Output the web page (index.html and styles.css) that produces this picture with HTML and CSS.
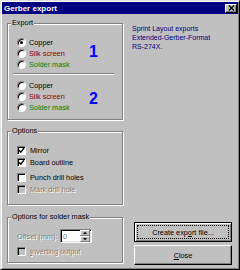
FILE: index.html
```html
<!DOCTYPE html>
<html lang="en">
<head>
    <meta charset="UTF-8">
    <title>Gerber export</title>
    <link rel="stylesheet" href="styles.css">
</head>
<body>
    <div class="window">
        <div class="titlebar">
            <span class="title">Gerber export</span>
            <span class="close-box">
                <svg width="7" height="6" viewBox="0 0 7 6"><path d="M1 0.5l5 5M6 0.5l-5 5" stroke="#000" stroke-width="1.3" fill="none"/></svg>
            </span>
        </div>

        <div class="dialog-body">
            <div class="left">
                <fieldset class="group export">
                    <legend>Export</legend>
                    <div class="layer">
                        <ul class="choices">
                            <li class="opt"><span class="radio on"></span>Copper</li>
                            <li class="opt silk"><span class="radio"></span>Silk screen</li>
                            <li class="opt mask"><span class="radio"></span>Solder mask</li>
                        </ul>
                        <span class="layer-num up">1</span>
                    </div>
                    <hr class="sep">
                    <div class="layer">
                        <ul class="choices">
                            <li class="opt"><span class="radio"></span>Copper</li>
                            <li class="opt silk"><span class="radio"></span>Silk screen</li>
                            <li class="opt mask"><span class="radio"></span>Solder mask</li>
                        </ul>
                        <span class="layer-num down">2</span>
                    </div>
                </fieldset>

                <fieldset class="group options">
                    <legend>Options</legend>
                    <div class="check"><span class="box"><svg width="7" height="7" viewBox="0 0 7 7"><path d="M1 3.2l1.8 1.9 3.2-4" stroke="#000" stroke-width="1.4" fill="none"/></svg></span>Mirror</div>
                    <div class="check"><span class="box"><svg width="7" height="7" viewBox="0 0 7 7"><path d="M1 3.2l1.8 1.9 3.2-4" stroke="#000" stroke-width="1.4" fill="none"/></svg></span>Board outline</div>
                    <div class="check spaced"><span class="box"></span>Punch drill holes</div>
                    <div class="check disabled"><span class="box"></span>Mark drill hole</div>
                </fieldset>

                <fieldset class="group solder">
                    <legend>Options for solder mask</legend>
                    <div class="offset-row">
                        <span class="offset-label disabled">Offset (mm):</span>
                        <span class="spin-field">
                            <span class="value">0</span>
                            <svg class="spin" width="10" height="12" viewBox="0 0 10 12">
                                <rect width="10" height="12" fill="#c0c0c0"/>
                                <path d="M0 0.5h9.5M0.5 0v5.5M0 6.5h9.5M0.5 6v5.5" stroke="#fff" fill="none"/>
                                <path d="M0 5.5h10M9.5 0v6M0 11.5h10M9.5 6v6" stroke="#808080" fill="none"/>
                                <path d="M5 1.8l2 2.2h-4zM3 8h4l-2 2.2z" fill="#000"/>
                            </svg>
                        </span>
                    </div>
                    <div class="check disabled second"><span class="box"></span><span><u>I</u>nverting output</span></div>
                </fieldset>
            </div>

            <div class="right">
                <p class="info">Sprint Layout exports<br>Extended-Gerber-Format<br>RS-274X.</p>
                <div class="buttons">
                    <button class="btn btn-default"><span class="focus">Create exp<u>o</u>rt file...</span></button>
                    <button class="btn"><u>C</u>lose</button>
                </div>
            </div>
        </div>
    </div>
</body>
</html>
```

FILE: styles.css
```css
* {
    box-sizing: border-box;
}

body {
    margin: 0;
    font-family: "Liberation Sans", Arial, sans-serif;
    font-size: 7.3px;
    background: #c0c0c0;
    color: #000;
}

.window {
    width: 240px;
    height: 270px;
    padding: 1px;
    display: flex;
    flex-direction: column;
    background: #c0c0c0;
    border: 1px solid;
    border-color: #dfdfdf #000 #000 #dfdfdf;
    box-shadow: inset 1px 1px #fff, inset -1px -1px #808080;
}

.titlebar {
    height: 12px;
    padding: 0 1px 0 2px;
    display: flex;
    align-items: center;
    justify-content: space-between;
    background: #000080;
    color: #fff;
}

.title {
    font-size: 8px;
    font-weight: bold;
}

.close-box {
    width: 12px;
    height: 9px;
    display: flex;
    align-items: center;
    justify-content: center;
    background: #c0c0c0;
    border: 1px solid;
    border-color: #fff #000 #000 #fff;
    box-shadow: inset -1px -1px #808080;
}

.dialog-body {
    flex: 1;
    display: flex;
    gap: 9px;
    padding: 5px 6px 3px 5px;
}

.left {
    width: 116px;
    flex-shrink: 0;
    padding-bottom: 2px;
}

.right {
    flex: 1;
    display: flex;
    flex-direction: column;
    justify-content: space-between;
}

/* group boxes */
.group {
    margin: 0;
    min-width: 0;
    padding: 0 0 0 3px;
    border: 1px solid #808080;
    box-shadow: 1px 1px 0 #fff, inset 1px 1px 0 #fff;
}

.group legend {
    padding: 0 1px;
    line-height: 8px;
    background: #c0c0c0;
}

.export {
    padding-top: 10px;
    padding-bottom: 6px;
}

.options {
    margin-top: 7px;
    padding-top: 9px;
    padding-bottom: 9px;
}

.solder {
    margin-top: 8px;
    padding-top: 8px;
    padding-bottom: 5px;
}

/* export layers */
.layer {
    display: flex;
    align-items: center;
}

.choices {
    list-style: none;
    margin: 0 0 0 6px;
    padding: 0;
    width: 72px;
}

.opt {
    height: 11px;
    display: flex;
    align-items: center;
    gap: 3px;
}

.silk {
    color: #900000;
}

.mask {
    color: #008000;
}

.layer-num {
    font-size: 16px;
    font-weight: bold;
    line-height: 16px;
    color: #0000ff;
}

.layer-num.up {
    margin-bottom: 4px;
}

.layer-num.down {
    margin-top: 4px;
}

.sep {
    margin: 3px 8px 5px 2px;
    border: 0;
    border-top: 1px solid #808080;
    border-bottom: 1px solid #fff;
}

.radio {
    width: 9px;
    height: 9px;
    flex-shrink: 0;
    display: flex;
    align-items: center;
    justify-content: center;
    border-radius: 50%;
    background: #fff;
    border: 1px solid;
    border-color: #808080 #fff #fff #808080;
    box-shadow: inset 1px 1px #000;
}

.radio.on::after {
    content: "";
    width: 3px;
    height: 3px;
    border-radius: 50%;
    background: #000;
}

/* checkboxes */
.check {
    height: 12px;
    margin-left: 6px;
    display: flex;
    align-items: center;
    gap: 4px;
}

.check.spaced {
    margin-top: 3px;
}

.check.second {
    margin-top: 2px;
}

.box {
    width: 9px;
    height: 9px;
    flex-shrink: 0;
    display: flex;
    align-items: center;
    justify-content: center;
    background: #fff;
    border: 1px solid;
    border-color: #808080 #fff #fff #808080;
    box-shadow: inset 1px 1px #000;
}

.disabled {
    color: #808080;
    text-shadow: 1px 1px 0 #fff;
}

.disabled .box {
    background: #c0c0c0;
}

/* offset spinner */
.offset-row {
    height: 14px;
    margin-left: 6px;
    display: flex;
    align-items: center;
}

.offset-label {
    width: 43px;
}

.spin-field {
    width: 32px;
    height: 14px;
    display: flex;
    align-items: center;
    background: #fff;
    border: 1px solid;
    border-color: #808080 #fff #fff #808080;
    box-shadow: inset 1px 1px #000, inset -1px -1px #dfdfdf;
}

.value {
    flex: 1;
    padding-left: 2px;
    color: #707070;
}

.spin {
    display: block;
    margin-right: 1px;
}

/* right side */
.info {
    margin: 5px 0 0;
    font-size: 7px;
    line-height: 9px;
    color: #000080;
}

.buttons {
    display: flex;
    flex-direction: column;
    gap: 3px;
}

.btn {
    width: 98px;
    height: 20px;
    margin-left: 2px;
    padding: 0;
    font: inherit;
    color: #000;
    background: #c0c0c0;
    border: 1px solid;
    border-color: #fff #000 #000 #fff;
    box-shadow: inset -1px -1px #808080;
}

.btn-default {
    padding: 2px;
    border-color: #000;
    box-shadow: inset 1px 1px #fff, inset -1px -1px #808080;
}

.focus {
    height: 100%;
    display: flex;
    align-items: center;
    justify-content: center;
    border: 1px dotted #000;
}
```
